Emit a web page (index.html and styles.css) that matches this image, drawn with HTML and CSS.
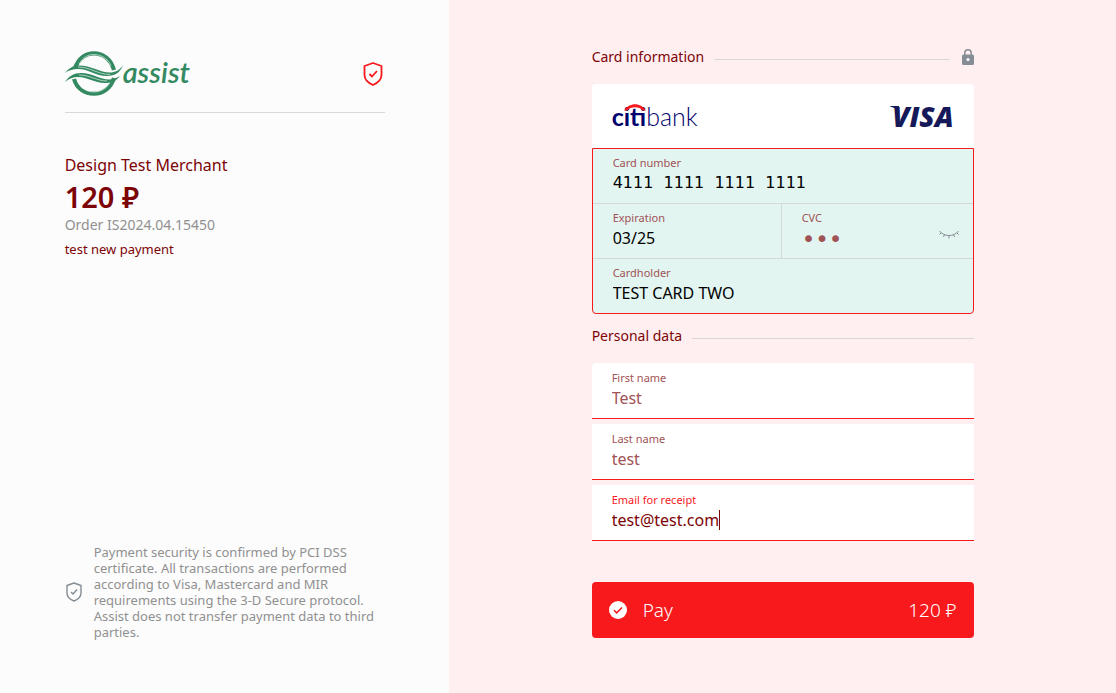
FILE: index.html
```html
<!DOCTYPE html>
<html lang="en">
<head>
    <meta charset="UTF-8">
    <meta name="viewport" content="width=device-width, initial-scale=1.0">
    <title>Assist payment</title>
    <link rel="stylesheet" href="styles.css">
</head>
<body>
    <main class="page">
        <section class="summary">
            <div class="summary-inner">
                <header class="summary-header">
                    <div class="logo">
                        <svg class="logo-mark" width="58" height="46" viewBox="0 0 58 46" aria-hidden="true">
                            <g fill="none">
                                <path d="M10 17C14 7 20 2.300 29 2.300S46 8 49 19" stroke="#338960" stroke-width="4.200"/>
                                <path d="M14 13C18 6 23 3.500 29 3.500S43 7 46 15" stroke="#fcfcfc" stroke-width=".6"/>
                                <path d="M9 28c3 10 11 14.700 20 14.700S46 37 49 27" stroke="#338960" stroke-width="4.200"/>
                                <path d="M13 31c4 7 10 10 16 10s13-3 16-10" stroke="#fcfcfc" stroke-width=".6"/>
                            </g>
                            <path fill="#338960" d="M0 22c4-5 8-7.500 14-7.500 12 0 21 7 31 7 5 0 9-2 13-7-3 7-8 10.500-16 10.500-12 0-18-7-29-7-5 0-9 1-13 4z"/>
                            <path fill="#338960" d="M0 31c4-6 9-9 16-9 11 0 19 6.500 28 6.500 4 0 7-1 11-3.500-4 5-8 7-15 7-11 0-17-6-27-6-5 0-9 1.500-13 5z"/>
                            <path fill="none" stroke="#fcfcfc" stroke-width=".6" d="M13 16c12 0 20 7.500 32 7.500M14 24c11 0 18 6 28 6"/>
                        </svg>
                        <span class="logo-text">assist</span>
                    </div>
                    <svg class="shield" width="24" height="24" viewBox="0 0 24 24" fill="none" stroke="#f7191c" stroke-width="1.800" stroke-linejoin="round" aria-hidden="true">
                        <path d="M12 1L20.500 4v9c0 5-4 8-8.500 10C7.500 21 3.500 18 3.500 13V4z"/>
                        <path d="M8.500 12l2.500 2.500 5-5.500"/>
                    </svg>
                </header>

                <h1 class="merchant">Design Test Merchant</h1>
                <div class="amount">120 ₽</div>
                <div class="order">Order IS2024.04.15450</div>
                <div class="comment">test new payment</div>

                <footer class="security">
                    <svg class="shield" width="18" height="20" viewBox="0 0 18 20" fill="none" stroke="#858d95" stroke-width="1.400" stroke-linejoin="round" aria-hidden="true">
                        <path d="M9 1l7 2.500V11c0 4-3 6.500-7 8-4-1.500-7-4-7-8V3.500z"/>
                        <path d="M6 10l2 2 4-4.500"/>
                    </svg>
                    <p>Payment security is confirmed by PCI DSS certificate. All transactions are performed according to Visa, Mastercard and MIR requirements using the 3-D Secure protocol. Assist does not transfer payment data to third parties.</p>
                </footer>
            </div>
        </section>

        <section class="payment">
            <form class="form">
                <div class="section-title">
                    <h2>Card information</h2>
                    <span class="line"></span>
                    <svg class="lock" width="12" height="16" viewBox="0 0 12 16" aria-hidden="true">
                        <path d="M2.800 7V4a3.200 3.200 0 0 1 6.400 0v3" fill="none" stroke="#858d95" stroke-width="1.500"/>
                        <rect y="5.500" width="12" height="10.500" rx="1.500" fill="#858d95"/>
                        <circle cx="6" cy="10.500" r="1.500" fill="#fff"/>
                    </svg>
                </div>

                <div class="card">
                    <div class="card-brands">
                        <div class="bank">
                            <svg class="bank-arc" width="22" height="7" viewBox="0 0 22 7" aria-hidden="true">
                                <path d="M0 6.500C5-2 17-2 22 6.500h-3C15 2 7 2 3 6.500z" fill="#f7191c"/>
                            </svg>
                            <b>citi</b><span>bank</span>
                        </div>
                        <div class="visa">VISA</div>
                    </div>
                    <div class="card-fields">
                        <div class="field wide">
                            <label for="number">Card number</label>
                            <input id="number" class="number" type="text" value="4111  1111  1111  1111">
                        </div>
                        <div class="field expiration">
                            <label for="expiration">Expiration</label>
                            <input id="expiration" type="text" value="03/25">
                        </div>
                        <div class="field cvc">
                            <label for="cvc">CVC</label>
                            <input id="cvc" type="password" value="123">
                            <button class="eye" type="button" aria-label="Show CVC">
                                <svg width="20" height="10" viewBox="0 0 20 10" fill="none" stroke="#858d95" aria-hidden="true">
                                    <path d="M.500 1C5 7 15 7 19.500 1"/>
                                    <path d="M10 5.500v3M5.500 4.500L4.500 7M14.500 4.500l1 2.500M2 3L.500 4.500M18 3l1.500 1.500"/>
                                </svg>
                            </button>
                        </div>
                        <div class="field wide">
                            <label for="holder">Cardholder</label>
                            <input id="holder" type="text" value="TEST CARD TWO">
                        </div>
                    </div>
                </div>

                <div class="section-title personal-title">
                    <h2>Personal data</h2>
                    <span class="line"></span>
                </div>

                <div class="personal">
                    <div class="field">
                        <label for="first">First name</label>
                        <input id="first" type="text" value="Test">
                    </div>
                    <div class="field">
                        <label for="last">Last name</label>
                        <input id="last" type="text" value="test">
                    </div>
                    <div class="field active">
                        <label for="email">Email for receipt</label>
                        <div class="value">
                            <input id="email" type="email" value="test@test.com">
                            <span class="caret"></span>
                        </div>
                    </div>
                </div>

                <button class="pay" type="submit">
                    <svg width="18" height="18" viewBox="0 0 18 18" aria-hidden="true">
                        <circle cx="9" cy="9" r="9" fill="#fff"/>
                        <path d="M5 9.200l2.700 2.700L13 6.500" fill="none" stroke="#f7191c" stroke-width="1.600"/>
                    </svg>
                    <span>Pay</span>
                    <span class="pay-amount">120 ₽</span>
                </button>
            </form>
        </section>
    </main>
</body>
</html>
```
FILE: styles.css
```css
* {
    box-sizing: border-box;
}

body {
    margin: 0;
    font-family: "Noto Sans", sans-serif;
    color: #7d0406;
}

h1, h2, p {
    margin: 0;
    font-weight: 400;
}

input {
    display: block;
    width: 100%;
    height: 22px;
    margin: 0;
    padding: 0;
    border: 0;
    outline: none;
    background: none;
    font-family: inherit;
    font-size: 16px;
    line-height: 22px;
    color: inherit;
}

button {
    border: 0;
    font-family: inherit;
    cursor: pointer;
}

.page {
    display: grid;
    grid-template-columns: 31fr 46fr;
    min-height: 100vh;
}

/* Left side */
.summary {
    display: flex;
    justify-content: center;
    padding: 51px 20px 53px;
    background: #fcfcfc;
}

.summary-inner {
    display: flex;
    flex-direction: column;
    width: 100%;
    max-width: 320px;
}

.summary-header {
    display: flex;
    align-items: center;
    justify-content: space-between;
    height: 62px;
    margin-bottom: 40px;
    padding-bottom: 16px;
    border-bottom: 1px solid #d8d8d8;
}

.logo {
    display: flex;
    align-items: center;
}

.logo-text {
    padding-bottom: 4px;
    font-family: Lato, sans-serif;
    font-size: 29px;
    font-style: italic;
    font-weight: 600;
    line-height: 40px;
    color: #338960;
}

.shield {
    flex-shrink: 0;
}

.merchant {
    font-size: 16px;
    line-height: 24px;
}

.amount {
    font-size: 29px;
    font-weight: 600;
    line-height: 40px;
}

.order {
    font-size: 14px;
    line-height: 16px;
    color: #909090;
}

.comment {
    margin-top: 8px;
    font-size: 13px;
    line-height: 16px;
}

.security {
    display: flex;
    align-items: center;
    gap: 11px;
    margin-top: auto;
    font-size: 13px;
    line-height: 16px;
    color: #909090;
}

/* Right side */
.payment {
    display: flex;
    justify-content: center;
    padding: 47px 20px;
    background: #ffeff0;
}

.form {
    width: 100%;
    max-width: 382px;
}

.section-title {
    display: flex;
    align-items: center;
    gap: 10px;
    height: 20px;
    margin-bottom: 17px;
}

.section-title h2 {
    font-size: 14px;
    line-height: 20px;
}

.line {
    flex: 1;
    height: 1px;
    margin-top: 4px;
    background: #d8d8d8;
}

.lock {
    margin-left: 2px;
}

.personal-title {
    margin-top: 12px;
}

.card-brands {
    display: flex;
    align-items: center;
    justify-content: space-between;
    height: 64px;
    padding: 0 20px;
    border-radius: 4px 4px 0 0;
    background: #fff;
}

.bank {
    position: relative;
    font-family: Lato, sans-serif;
    font-size: 25px;
    line-height: 32px;
    color: #02026e;
}

.bank b {
    font-weight: 700;
}

.bank span {
    font-weight: 300;
}

.bank-arc {
    position: absolute;
    top: 4px;
    left: 12px;
}

.visa {
    position: relative;
    font-family: "Open Sans", sans-serif;
    font-size: 28px;
    font-style: italic;
    font-weight: 800;
    line-height: 32px;
    color: #15195a;
}

.visa::before {
    content: "";
    position: absolute;
    top: 6px;
    left: -3px;
    width: 10px;
    height: 4px;
    background: #15195a;
    clip-path: polygon(0 0, 100% 0, 100% 100%);
}

.card-fields {
    display: grid;
    grid-template-columns: 188fr 192fr;
    border: 1px solid #f7191c;
    border-radius: 0 0 4px 4px;
    background: #e3f5f1;
    color: #000;
}

.field {
    position: relative;
    height: 55px;
    padding: 6px 20px;
}

.field label {
    display: block;
    font-size: 11px;
    line-height: 18px;
    color: #9f5355;
}

.card-fields .field {
    padding-top: 5px;
    border-bottom: 1px solid #d3d9d7;
}

.card-fields .field:last-child {
    height: 54px;
    border-bottom: 0;
}

.wide {
    grid-column: 1 / -1;
}

.cvc {
    border-left: 1px solid #d3d9d7;
    color: #9f5355;
}

.cvc input {
    height: 24px;
    font-family: "DejaVu Sans", sans-serif;
    font-size: 23px;
    line-height: 24px;
}

.number {
    font-family: "DejaVu Sans", sans-serif;
}

.eye {
    position: absolute;
    top: 26px;
    right: 14px;
    display: flex;
    padding: 0;
    background: none;
}

.personal {
    display: grid;
    gap: 5px;
}

.personal .field {
    height: 56px;
    border-bottom: 1px solid #f7191c;
    background: #fff;
    color: #9f5355;
}

.personal .field:first-child {
    border-radius: 4px 4px 0 0;
}

.personal .active {
    color: #7d0406;
}

.personal .active label {
    color: #f7191c;
}

.value {
    display: flex;
    align-items: center;
}

.value input {
    width: auto;
    field-sizing: content;
}

.caret {
    width: 1px;
    height: 20px;
    background: #7d0406;
}

.pay {
    display: flex;
    align-items: center;
    gap: 16px;
    width: 100%;
    height: 56px;
    margin-top: 41px;
    padding: 0 17px;
    border-radius: 4px;
    background: #f7191c;
    font-size: 19px;
    font-weight: 300;
    line-height: 24px;
    color: #fff;
}

.pay-amount {
    margin-left: auto;
}
```
